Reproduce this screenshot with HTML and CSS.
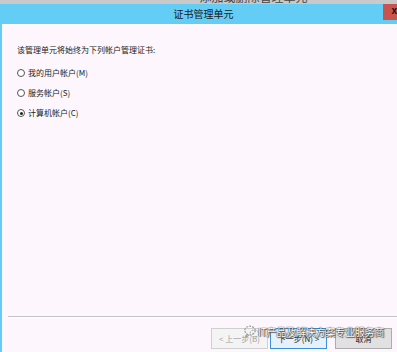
FILE: index.html
```html
<!DOCTYPE html>
<html>
<head>
<meta charset="utf-8">
<link rel="stylesheet" href="styles.css">
</head>
<body>
<div class="screen">
  <div class="topstrip"><span class="toptext">添加或删除管理单元</span></div>
  <div class="titlebar">
    <div class="title">证书管理单元</div>
    <div class="close">x</div>
  </div>
  <div class="window">
    <div class="content">
      <div class="prompt">该管理单元将始终为下列帐户管理证书:</div>
      <label class="opt"><span class="radio"></span>我的用户帐户(M)</label>
      <label class="opt"><span class="radio"></span>服务帐户(S)</label>
      <label class="opt"><span class="radio checked"></span>计算机帐户(C)</label>
    </div>
    <div class="sep"></div>
    <div class="buttons">
      <div class="btn disabled">&lt; 上一步(B)</div>
      <div class="btn focus">下一步(N) &gt;</div>
      <div class="btn cancel">取消</div>
    </div>
  </div>
  <div class="watermark">
    <svg class="wx" width="16" height="14" viewBox="0 0 16 14">
      <ellipse cx="6" cy="5.5" rx="5.2" ry="4.3" fill="none" stroke="#9a9a9a" stroke-width="1.2" stroke-dasharray="2 1"/>
      <ellipse cx="10.5" cy="8.5" rx="4.3" ry="3.5" fill="none" stroke="#b5b5b5" stroke-width="1.1" stroke-dasharray="2 1"/>
      <path d="M3 9 L2 12 L5 10" fill="none" stroke="#9a9a9a" stroke-width="1"/>
    </svg>
    <span class="wmtext">IT产品及解决方案专业服务商</span>
  </div>
</div>
</body>
</html>
```
FILE: styles.css
```css
html, body {
  margin: 0;
  padding: 0;
}
body {
  width: 397px;
  height: 352px;
  overflow: hidden;
  font-family: "Noto Sans CJK SC", "Liberation Sans", sans-serif;
  background: #fdf7fd;
}
.screen {
  position: relative;
  width: 397px;
  height: 352px;
  display: flex;
  flex-direction: column;
}
.topstrip {
  height: 4px;
  background: #c9c9c9;
  overflow: hidden;
  text-align: center;
  padding-left: 110px;
}
.toptext {
  display: block;
  margin-top: -9px;
  font-size: 12px;
  line-height: 12px;
  color: #444;
}
.titlebar {
  height: 20px;
  background: #63cdf5;
  display: flex;
  align-items: flex-start;
}
.title {
  flex: 1;
  text-align: center;
  padding-left: 24px;
  font-size: 10px;
  line-height: 20px;
  color: #1a1a1a;
}
.close {
  width: 14px;
  height: 16px;
  background: #c9544f;
  color: #111;
  font-family: "Liberation Sans", sans-serif;
  font-weight: bold;
  font-size: 10px;
  line-height: 14px;
  text-align: right;
}
.window {
  flex: 1;
  display: flex;
  flex-direction: column;
  border-left: 2px solid #63cdf5;
  background: #fdf7fd;
}
.content {
  flex: 1;
  padding: 20px 0 0 15px;
  font-size: 8px;
  color: #222;
}
.prompt {
  line-height: 12px;
  margin-bottom: 11px;
}
.opt {
  display: flex;
  align-items: center;
  height: 12px;
  line-height: 12px;
  margin-bottom: 8px;
}
.radio {
  width: 6px;
  height: 6px;
  border: 1px solid #555;
  border-radius: 50%;
  background: #fff;
  margin-right: 3px;
  position: relative;
}
.radio.checked::after {
  content: "";
  position: absolute;
  left: 1.5px;
  top: 1.5px;
  width: 3px;
  height: 3px;
  border-radius: 50%;
  background: #222;
}
.sep {
  margin-left: 6px;
  height: 1px;
  background: #c4c4c4;
  border-bottom: 1px solid #ffffff;
}
.buttons {
  display: flex;
  justify-content: flex-end;
  padding: 10px 5px 3px 0;
  gap: 2px;
}
.btn {
  width: 55px;
  height: 19px;
  border: 1px solid #adadad;
  background: #e1e1e1;
  font-size: 8px;
  line-height: 19px;
  text-align: center;
  color: #222;
}
.btn.disabled {
  background: #f4f4f4;
  border-color: #d0d0d0;
  color: #a0a0a0;
}
.btn.focus {
  border-color: #3c8fd8;
  background: #e5f1fb;
}
.btn.cancel {
  margin-left: 6px;
}
.watermark {
  position: absolute;
  left: 244px;
  top: 325px;
  display: flex;
  align-items: center;
}
.wx {
  margin-right: -2px;
}
.wmtext {
  font-size: 10px;
  line-height: 14px;
  color: #ffffff;
  letter-spacing: -0.2px;
  text-shadow: 0 0 1px #333, 0 0 1px #333, 1px 1px 1px #555;
}
```
